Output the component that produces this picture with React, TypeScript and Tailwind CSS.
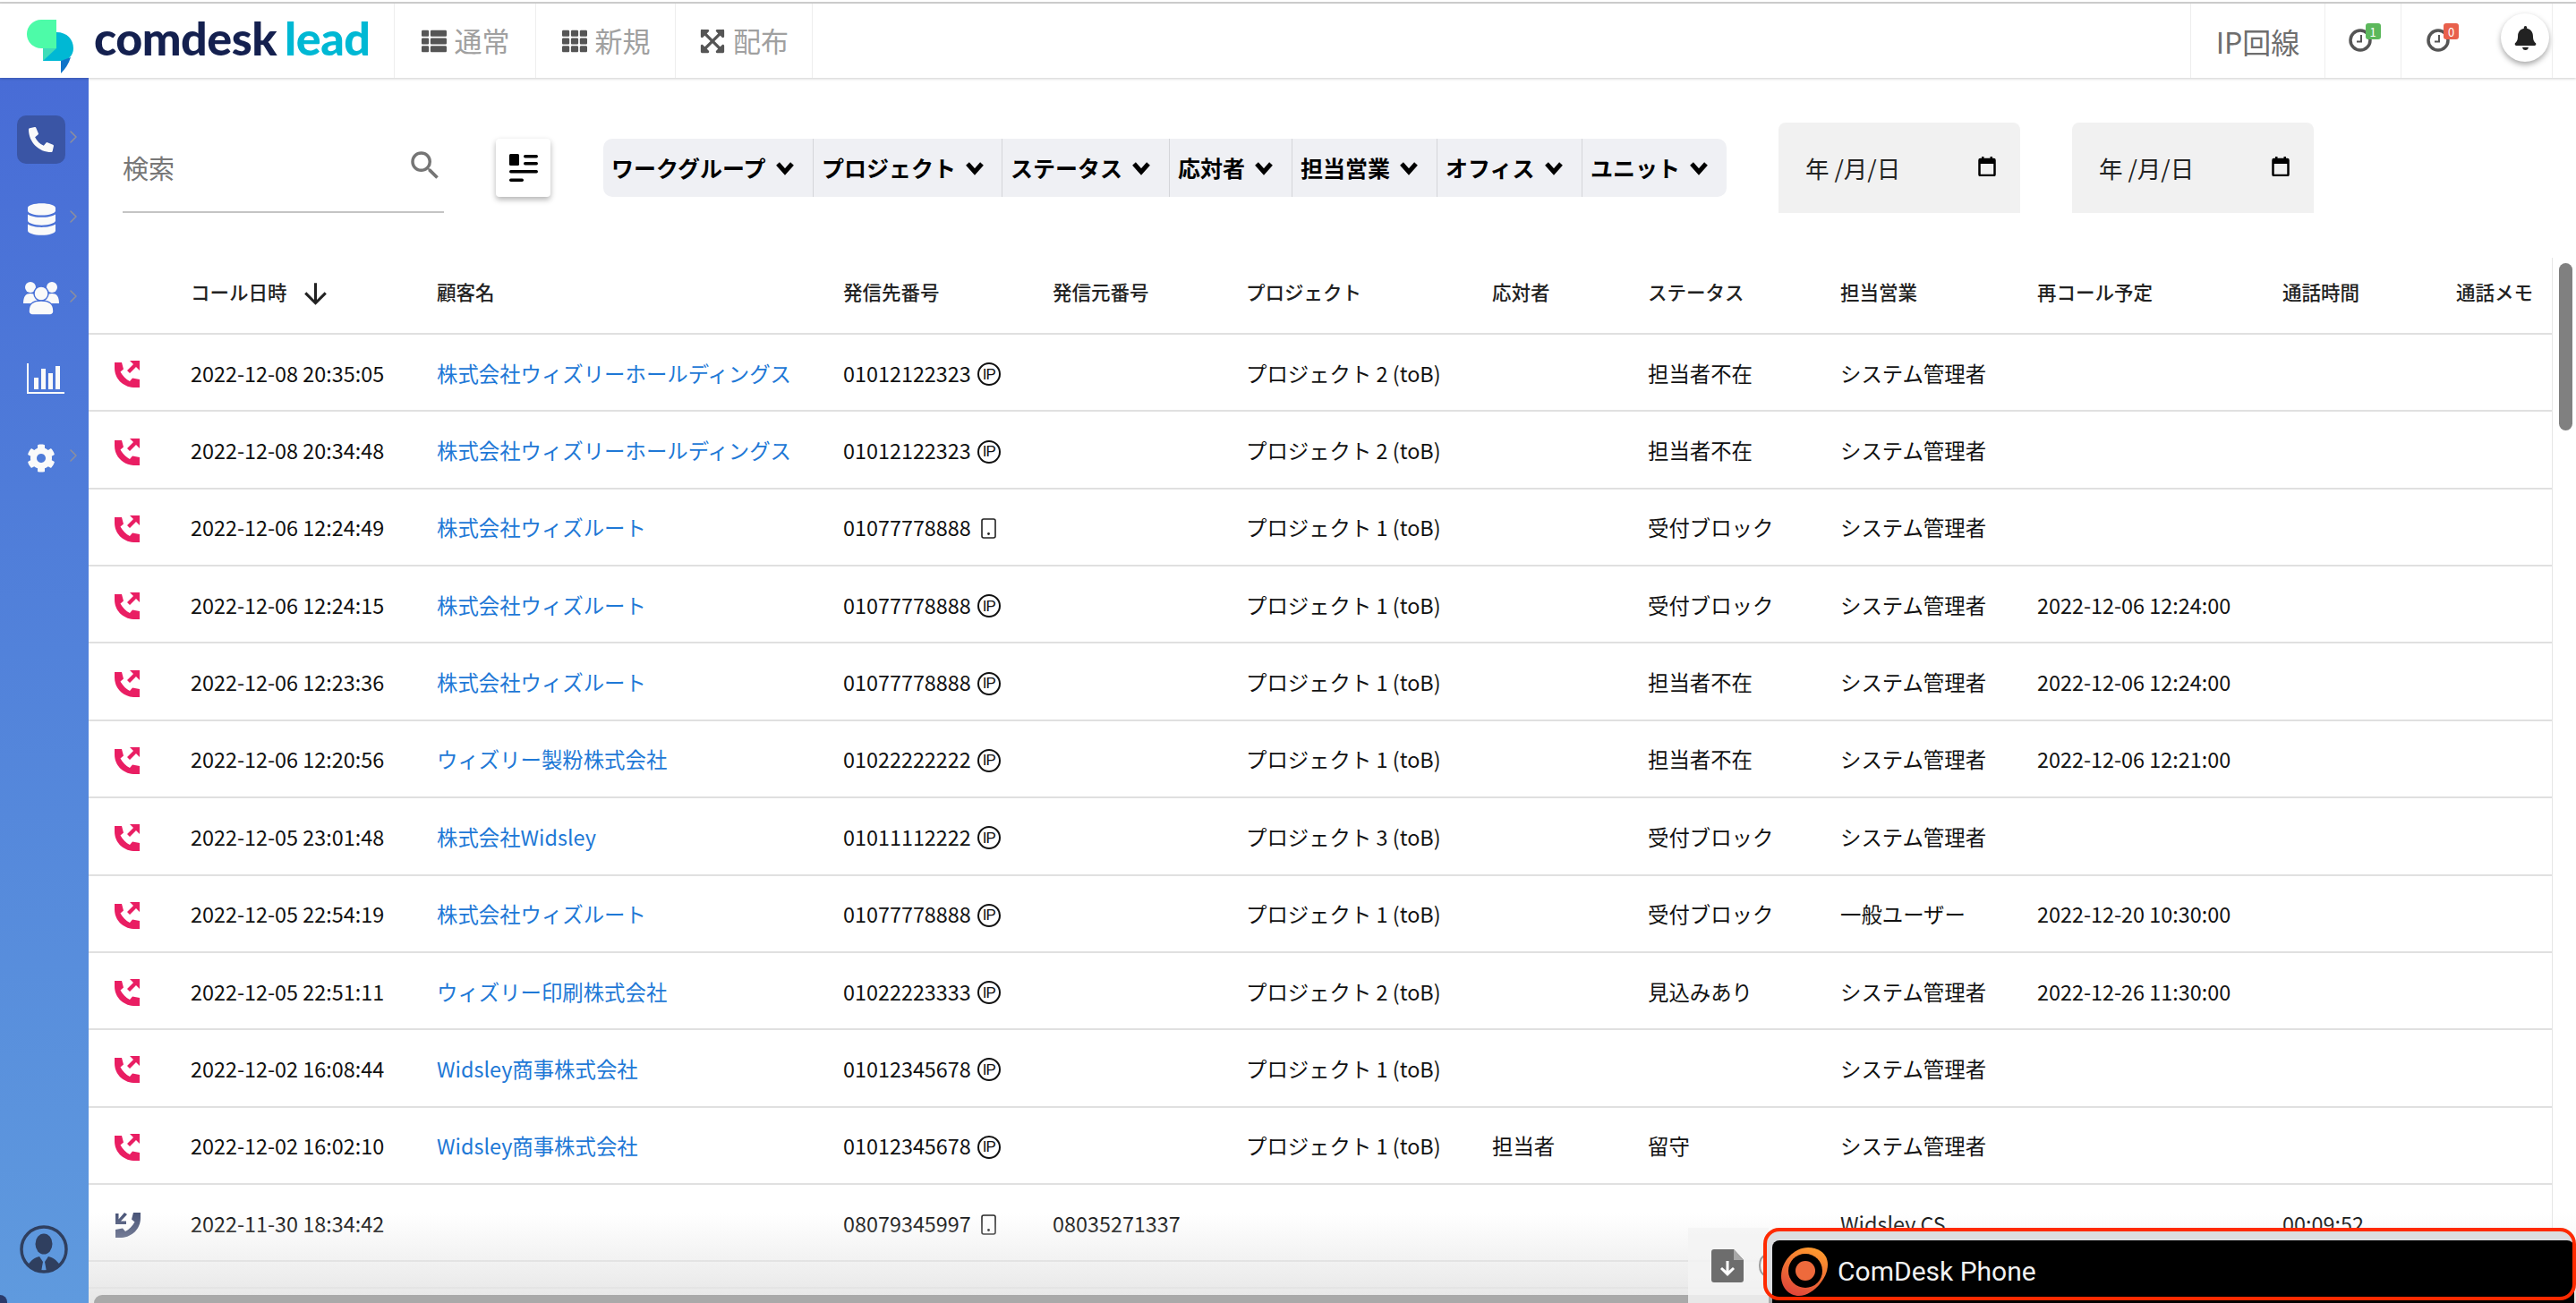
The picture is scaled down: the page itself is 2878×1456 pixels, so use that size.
import { FaThList, FaTh, FaExpandArrowsAlt, FaPhoneAlt, FaDatabase, FaCog, FaBell } from 'react-icons/fa';
import { MdSearch, MdArrowDownward } from 'react-icons/md';
import { ChevronRight } from 'lucide-react';

type Row = {
  time: string;
  name?: string;
  to: string;
  toType: 'ip' | 'mobile';
  from?: string;
  project?: string;
  agent?: string;
  status?: string;
  sales?: string;
  recall?: string;
  duration?: string;
  incoming?: boolean;
};

const holdings = '株式会社ウィズリーホールディングス';
const wizroute = '株式会社ウィズルート';
const admin = 'システム管理者';
const p1 = 'プロジェクト 1 (toB)';
const p2 = 'プロジェクト 2 (toB)';
const p3 = 'プロジェクト 3 (toB)';

const rows: Row[] = [
  { time: '2022-12-08 20:35:05', name: holdings, to: '01012122323', toType: 'ip', project: p2, status: '担当者不在', sales: admin },
  { time: '2022-12-08 20:34:48', name: holdings, to: '01012122323', toType: 'ip', project: p2, status: '担当者不在', sales: admin },
  { time: '2022-12-06 12:24:49', name: wizroute, to: '01077778888', toType: 'mobile', project: p1, status: '受付ブロック', sales: admin },
  { time: '2022-12-06 12:24:15', name: wizroute, to: '01077778888', toType: 'ip', project: p1, status: '受付ブロック', sales: admin, recall: '2022-12-06 12:24:00' },
  { time: '2022-12-06 12:23:36', name: wizroute, to: '01077778888', toType: 'ip', project: p1, status: '担当者不在', sales: admin, recall: '2022-12-06 12:24:00' },
  { time: '2022-12-06 12:20:56', name: 'ウィズリー製粉株式会社', to: '01022222222', toType: 'ip', project: p1, status: '担当者不在', sales: admin, recall: '2022-12-06 12:21:00' },
  { time: '2022-12-05 23:01:48', name: '株式会社Widsley', to: '01011112222', toType: 'ip', project: p3, status: '受付ブロック', sales: admin },
  { time: '2022-12-05 22:54:19', name: wizroute, to: '01077778888', toType: 'ip', project: p1, status: '受付ブロック', sales: '一般ユーザー', recall: '2022-12-20 10:30:00' },
  { time: '2022-12-05 22:51:11', name: 'ウィズリー印刷株式会社', to: '01022223333', toType: 'ip', project: p2, status: '見込みあり', sales: admin, recall: '2022-12-26 11:30:00' },
  { time: '2022-12-02 16:08:44', name: 'Widsley商事株式会社', to: '01012345678', toType: 'ip', project: p1, sales: admin },
  { time: '2022-12-02 16:02:10', name: 'Widsley商事株式会社', to: '01012345678', toType: 'ip', project: p1, agent: '担当者', status: '留守', sales: admin },
  { time: '2022-11-30 18:34:42', to: '08079345997', toType: 'mobile', from: '08035271337', sales: 'Widsley CS', duration: '00:09:52', incoming: true },
];

const gridCols = 'grid grid-cols-[114px_275px_454px_234px_216px_275px_174px_215px_220px_274px_194px_1fr]';
const filters = [
  { label: 'ワークグループ', w: 'w-[234px]' },
  { label: 'プロジェクト', w: 'w-[211px]' },
  { label: 'ステータス', w: 'w-[187px]' },
  { label: '応対者', w: 'w-[137px]' },
  { label: '担当営業', w: 'w-[162px]' },
  { label: 'オフィス', w: 'w-[162px]' },
  { label: 'ユニット', w: 'w-[162px]' },
];

function Logo() {
  return (
    <svg width="52" height="60" viewBox="0 0 52 60">
      <path d="M33 14C45 14 52 22 52 32C52 40 46 46 38 46H18V32H33Z" fill="#00b8d4" />
      <path d="M38 46L49 42Q46 52 38 60Z" fill="#0f74c9" />
      <path d="M16 0H33V32H16A16 16 0 0 1 16 0Z" fill="#4dfba8" />
      <path d="M18 32H33L18 46Z" fill="#3fdcb8" />
    </svg>
  );
}

function CallIcon({ incoming }: { incoming?: boolean }) {
  const handset = 'M0 2H8L10 9.5L6.5 12.5C9 17 13 21 17 23L20 19.5L28 21V30H21C9 29 0 20 0 8Z';
  if (incoming) {
    return (
      <svg width="29" height="30" viewBox="0 0 29 30" fill="#4a5578" className="mt-[2px]">
        <path d={handset} transform="translate(29 0) scale(-1 1)" />
        <path d="M1 3L4.5 3V9.5L11 2L14 4L7 11.5H13V15H1Z" />
      </svg>
    );
  }
  return (
    <svg width="29" height="30" viewBox="0 0 29 30" fill="#e91e63" className="mt-[2px]">
      <path d={handset} />
      <path d="M17 0H28V11L24 7L17 14L14 11L21 4Z" />
    </svg>
  );
}

function LineIcon({ type }: { type: 'ip' | 'mobile' }) {
  if (type === 'mobile') {
    return (
      <svg width="17" height="23" viewBox="0 0 17 23" className="ml-[11px] mt-[2px]">
        <rect x="1" y="1" width="15" height="21" rx="2" fill="none" stroke="#222" strokeWidth="1.6" />
        <circle cx="8.5" cy="17.5" r="1.4" fill="#222" />
      </svg>
    );
  }
  return (
    <span className="ml-[7px] mt-[2px] flex h-[26px] w-[26px] items-center justify-center rounded-full border-2 border-[#111] font-['Liberation_Sans',sans-serif] text-[17px] leading-none tracking-[-1px]">
      IP
    </span>
  );
}

function ClockBadge({ count, color }: { count: string; color: string }) {
  return (
    <div className="relative h-[30px] w-[36px]">
      <svg width="26" height="26" viewBox="0 0 26 26" className="absolute left-0 top-[5px]">
        <circle cx="13" cy="13" r="11" fill="none" stroke="#555" strokeWidth="3.5" />
        <path d="M14 7V14.5H9" fill="none" stroke="#555" strokeWidth="2" />
      </svg>
      <span className={`absolute left-[19px] top-[-1px] flex h-[18px] w-[17px] items-center justify-center rounded-[3px] text-[13px] leading-none text-white ${color}`}>
        {count}
      </span>
    </div>
  );
}

function DateBox() {
  return (
    <div className="flex h-[101px] w-[270px] items-center justify-between rounded-t-lg bg-[#f1f1f1] pl-[30px] pr-[27px]">
      <span className="text-[26.5px] text-[#222]">年 /月/日</span>
      <svg width="20" height="22" viewBox="0 0 20 22" className="mb-[3px]">
        <rect x="1.5" y="3" width="17" height="18" rx="1" fill="none" stroke="#000" strokeWidth="2.5" />
        <rect x="1.5" y="3" width="17" height="5" fill="#000" />
        <rect x="4" y="0" width="2.5" height="4" fill="#000" />
        <rect x="13.5" y="0" width="2.5" height="4" fill="#000" />
      </svg>
    </div>
  );
}

function SideItem({ active, chevron = true, children }: { active?: boolean; chevron?: boolean; children: React.ReactNode }) {
  return (
    <div className="relative flex h-[89px] w-full items-center justify-center pr-[7px]">
      <div className={`flex h-[54px] w-[54px] items-center justify-center rounded-[10px] text-[#fafafa] ${active ? 'bg-[#3a55a5]' : ''}`}>
        {children}
      </div>
      {chevron && <ChevronRight className="absolute left-[70px] top-[30px] h-[24px] w-[24px] text-[#8d8f9c]" strokeWidth={1.5} />}
    </div>
  );
}

function UsersIcon() {
  return (
    <svg width="40" height="37" viewBox="0 0 40 37" fill="#fafafa" stroke="#4a72d8" strokeWidth="1.5">
      <circle cx="8" cy="6" r="6" strokeWidth="0" />
      <circle cx="32" cy="6" r="6" strokeWidth="0" />
      <path d="M0 24C0 16 3 13 8 13C13 13 16 16 16 24H2C1 24 0 24 0 24Z" strokeWidth="0" />
      <path d="M24 24C24 16 27 13 32 13C37 13 40 16 40 24Z" strokeWidth="0" />
      <circle cx="20" cy="13" r="8" />
      <path d="M6 33C6 24 11 21 20 21C29 21 34 24 34 33C34 35 32 37 30 37H10C8 37 6 35 6 33Z" />
    </svg>
  );
}

export default function App() {
  return (
    <div className="relative h-[1456px] w-[2878px] overflow-hidden bg-white font-['Noto_Sans_CJK_JP','Noto_Sans',sans-serif] text-[#111]">
      <div className="mt-[2px] h-[2px] bg-[#cfcfcf]" />

      <header className="relative z-10 flex h-[83px] items-stretch bg-white shadow-[0_1px_3px_rgba(0,0,0,0.2)]">
        <div className="flex w-[441px] items-start border-r border-[#eeeeee] pl-[30px] pt-[18px]">
          <Logo />
          <span className="ml-[23px] mt-[-12px] font-['Lato',sans-serif] text-[52px] font-black leading-[64px] tracking-[-0.5px] text-[#14204f]">
            comdesk<span className="ml-[9px] text-[#00b8d4]">lead</span>
          </span>
        </div>
        <div className="flex w-[158px] items-center justify-center gap-[8px] border-r border-[#eeeeee] text-[31px] text-[#a0a0a0]">
          <FaThList className="h-[28px] w-[30px] text-[#555]" />通常
        </div>
        <div className="flex w-[156px] items-center justify-center gap-[8px] border-r border-[#eeeeee] text-[31px] text-[#a0a0a0]">
          <FaTh className="h-[28px] w-[30px] text-[#555]" />新規
        </div>
        <div className="flex w-[153px] items-center justify-center gap-[8px] border-r border-[#eeeeee] text-[31px] text-[#a0a0a0]">
          <FaExpandArrowsAlt className="h-[30px] w-[30px] text-[#555]" />配布
        </div>
        <div className="ml-auto flex w-[150px] items-center justify-center border-l border-[#eeeeee] text-[32px] text-[#6e6e6e]">IP回線</div>
        <div className="flex w-[85px] items-center justify-center border-l border-[#eeeeee] pb-[7px] pl-[3px]">
          <ClockBadge count="1" color="bg-[#5cb85c]" />
        </div>
        <div className="flex w-[169px] items-center border-l border-[#eeeeee] pb-[7px] pl-[28px]">
          <ClockBadge count="0" color="bg-[#e8604c]" />
          <div className="ml-[47px] flex h-[54px] w-[54px] shrink-0 items-center justify-center rounded-full bg-white shadow-[0_3px_6px_rgba(0,0,0,0.35)]">
            <FaBell className="h-[27px] w-[27px] text-[#222]" />
          </div>
        </div>
        <div className="w-[27px] border-l border-[#eeeeee]" />
      </header>

      <div className="flex h-[1369px]">
        <aside className="relative flex w-[99px] shrink-0 flex-col items-center bg-gradient-to-b from-[#486cd6] to-[#5f9ade] pt-[24px]">
          <SideItem active><FaPhoneAlt className="h-[28px] w-[28px]" /></SideItem>
          <SideItem><FaDatabase className="h-[36px] w-[31px]" /></SideItem>
          <SideItem><UsersIcon /></SideItem>
          <SideItem chevron={false}>
            <svg width="42" height="34" viewBox="0 0 42 34" fill="#fafafa" className="ml-[10px]">
              <path d="M0 0H2V32H42V34H0Z" />
              <rect x="8" y="16" width="5" height="13" />
              <rect x="16" y="6" width="5" height="23" />
              <rect x="24" y="11" width="5" height="18" />
              <rect x="32" y="3" width="5" height="26" />
            </svg>
          </SideItem>
          <SideItem><FaCog className="h-[32px] w-[32px]" /></SideItem>
          <svg width="54" height="54" viewBox="0 0 54 54" className="mt-auto mb-[33px] mr-[2px]">
            <circle cx="27" cy="27" r="25" fill="none" stroke="#2f3f5f" strokeWidth="3.5" />
            <ellipse cx="27" cy="21" rx="9.5" ry="11.5" fill="#2f3f5f" />
            <path d="M9 45C13 38 18 36 22 35L26 41L24 52C18 51 13 49 9 45Z" fill="#2f3f5f" />
            <path d="M45 45C41 38 36 36 32 35L28 41L30 52C36 51 41 49 45 45Z" fill="#2f3f5f" />
          </svg>
          <div className="absolute bottom-0 left-0 h-[9px] w-[8px] rounded-tr-full bg-[#2a3a6a]" />
        </aside>

        <main className="relative flex-1 overflow-hidden pt-[50px]">
          <div className="flex h-[101px] items-center">
            <div className="ml-[38px] flex h-[101px] w-[359px] items-center justify-between border-b-2 border-[#c4c4c4]">
              <span className="mt-[3px] text-[29px] text-[#777]">検索</span>
              <MdSearch className="mb-[3px] h-[42px] w-[42px] text-[#757575]" />
            </div>
            <button className="ml-[58px] flex h-[65px] w-[61px] items-center justify-center rounded-[4px] bg-white shadow-[0_3px_6px_rgba(0,0,0,0.3)]">
              <svg width="32" height="32" viewBox="0 0 32 32" fill="#000">
                <rect x="0" y="0" width="11" height="13" rx="1.5" />
                <rect x="16" y="1" width="16" height="3.4" rx="1.7" />
                <rect x="16" y="9" width="16" height="3.4" rx="1.7" />
                <rect x="0" y="18" width="32" height="3.4" rx="1.7" />
                <rect x="0" y="27.5" width="16" height="3.4" rx="1.7" />
              </svg>
            </button>
            <div className="ml-[59px] flex h-[65px] overflow-hidden rounded-[10px] bg-[#eff0f4]">
              {filters.map((f, i) => (
                <div key={f.label} className={`flex items-center gap-[11px] pl-[9px] text-[25px] font-bold text-black ${f.w} ${i > 0 ? 'border-l border-[#d4d5d9]' : ''}`}>
                  {f.label}
                  <svg width="20" height="16" viewBox="0 0 20 16" fill="none" stroke="#000" strokeWidth="5">
                    <path d="M2 3L10 12L18 3" />
                  </svg>
                </div>
              ))}
            </div>
            <div className="ml-[58px]"><DateBox /></div>
            <div className="ml-[58px]"><DateBox /></div>
          </div>

          <div className={`${gridCols} mt-[41px] h-[95px] items-center border-b-2 border-[#e0e0e0] pt-[2px] text-[21.5px] font-medium text-[#222]`}>
            <div />
            <div className="flex items-center gap-[13px]">
              コール日時
              <MdArrowDownward className="mt-[3px] h-[37px] w-[37px] text-[#222]" />
            </div>
            <div>顧客名</div>
            <div>発信先番号</div>
            <div>発信元番号</div>
            <div>プロジェクト</div>
            <div>応対者</div>
            <div>ステータス</div>
            <div>担当営業</div>
            <div>再コール予定</div>
            <div>通話時間</div>
            <div>通話メモ</div>
          </div>

          {rows.map((r) => (
            <div key={r.time} className={`${gridCols} h-[86.36px] items-center border-b-2 border-[#e0e0e0] pt-[2px] text-[23.4px]`}>
              <div className="pl-[29px]"><CallIcon incoming={r.incoming} /></div>
              <div>{r.time}</div>
              <div className="text-[#1e78d6]">{r.name}</div>
              <div className="flex items-center">
                {r.to}
                <LineIcon type={r.toType} />
              </div>
              <div>{r.from}</div>
              <div>{r.project}</div>
              <div>{r.agent}</div>
              <div>{r.status}</div>
              <div>{r.sales}</div>
              <div>{r.recall}</div>
              <div>{r.duration}</div>
              <div />
            </div>
          ))}
          <div className="h-[30px] border-b-2 border-[#dcdcdc]" />
        </main>
      </div>

      {/* スクロールバー */}
      <div className="absolute bottom-0 left-[2851px] top-[288px] w-[27px] border-l border-[#e6e6e6] bg-white" />
      <div className="absolute left-[2859px] top-[294px] h-[187px] w-[15px] rounded-full bg-[#808080]" />

      <div className="pointer-events-none absolute bottom-0 left-[99px] right-0 h-[100px] bg-gradient-to-b from-transparent to-[#e6e6e6]" />
      <div className="absolute bottom-0 left-[105px] h-[9px] w-[1900px] rounded-t-full bg-[#a9a9a9]" />

      {/* ComDesk Phone 通知 */}
      <div className="absolute left-[1886px] top-[1372px] flex h-[84px] w-[90px] items-center bg-[#f3f3f3]/85 pl-[26px]">
        <svg width="36" height="37" viewBox="0 0 36 37">
          <path d="M3 0H25L36 12V34Q36 37 33 37H3Q0 37 0 34V3Q0 0 3 0Z" fill="#6d6d6d" />
          <path d="M25 0L36 12H25Z" fill="#a8a8a8" />
          <path d="M16.5 13H19.5V24L24 20L26 22L18 30L10 22L12 20L16.5 24Z" fill="#fff" />
        </svg>
        <svg width="8" height="26" viewBox="0 0 8 26" className="ml-[17px]" fill="none" stroke="#9a9a9a" strokeWidth="2">
          <path d="M8 1C3 3 1 8 1 13C1 18 3 23 8 25" />
        </svg>
      </div>
      <div className="absolute bottom-[3px] left-[1970px] right-0 top-[1372px] rounded-[18px] bg-[#dcdde0]" />
      <div className="absolute bottom-0 left-[1980px] right-[2px] top-[1386px] flex items-center rounded-t-lg bg-black pl-[10px]">
        <svg width="52" height="54" viewBox="0 0 52 54">
          <defs>
            <linearGradient id="phoneLogo" x1="0.7" y1="0" x2="0.3" y2="1">
              <stop offset="0" stopColor="#ff9a2e" />
              <stop offset="1" stopColor="#e0453a" />
            </linearGradient>
          </defs>
          <path d="M30 0C42 0 52 7 52 19C52 36 34 54 20 54C8 54 0 44 0 32C0 16 14 0 30 0Z" fill="url(#phoneLogo)" />
          <ellipse cx="27" cy="26" rx="19" ry="19" fill="#000" />
          <ellipse cx="27" cy="26" rx="11" ry="11" fill="#ee6a3c" />
        </svg>
        <span className="ml-[11px] font-['Roboto',sans-serif] text-[30px] leading-none text-[#f2f2f2]">ComDesk Phone</span>
      </div>
      <div className="pointer-events-none absolute bottom-[3px] left-[1970px] right-0 top-[1372px] rounded-[18px] border-[4px] border-[#ff2a00]" />
    </div>
  );
}
